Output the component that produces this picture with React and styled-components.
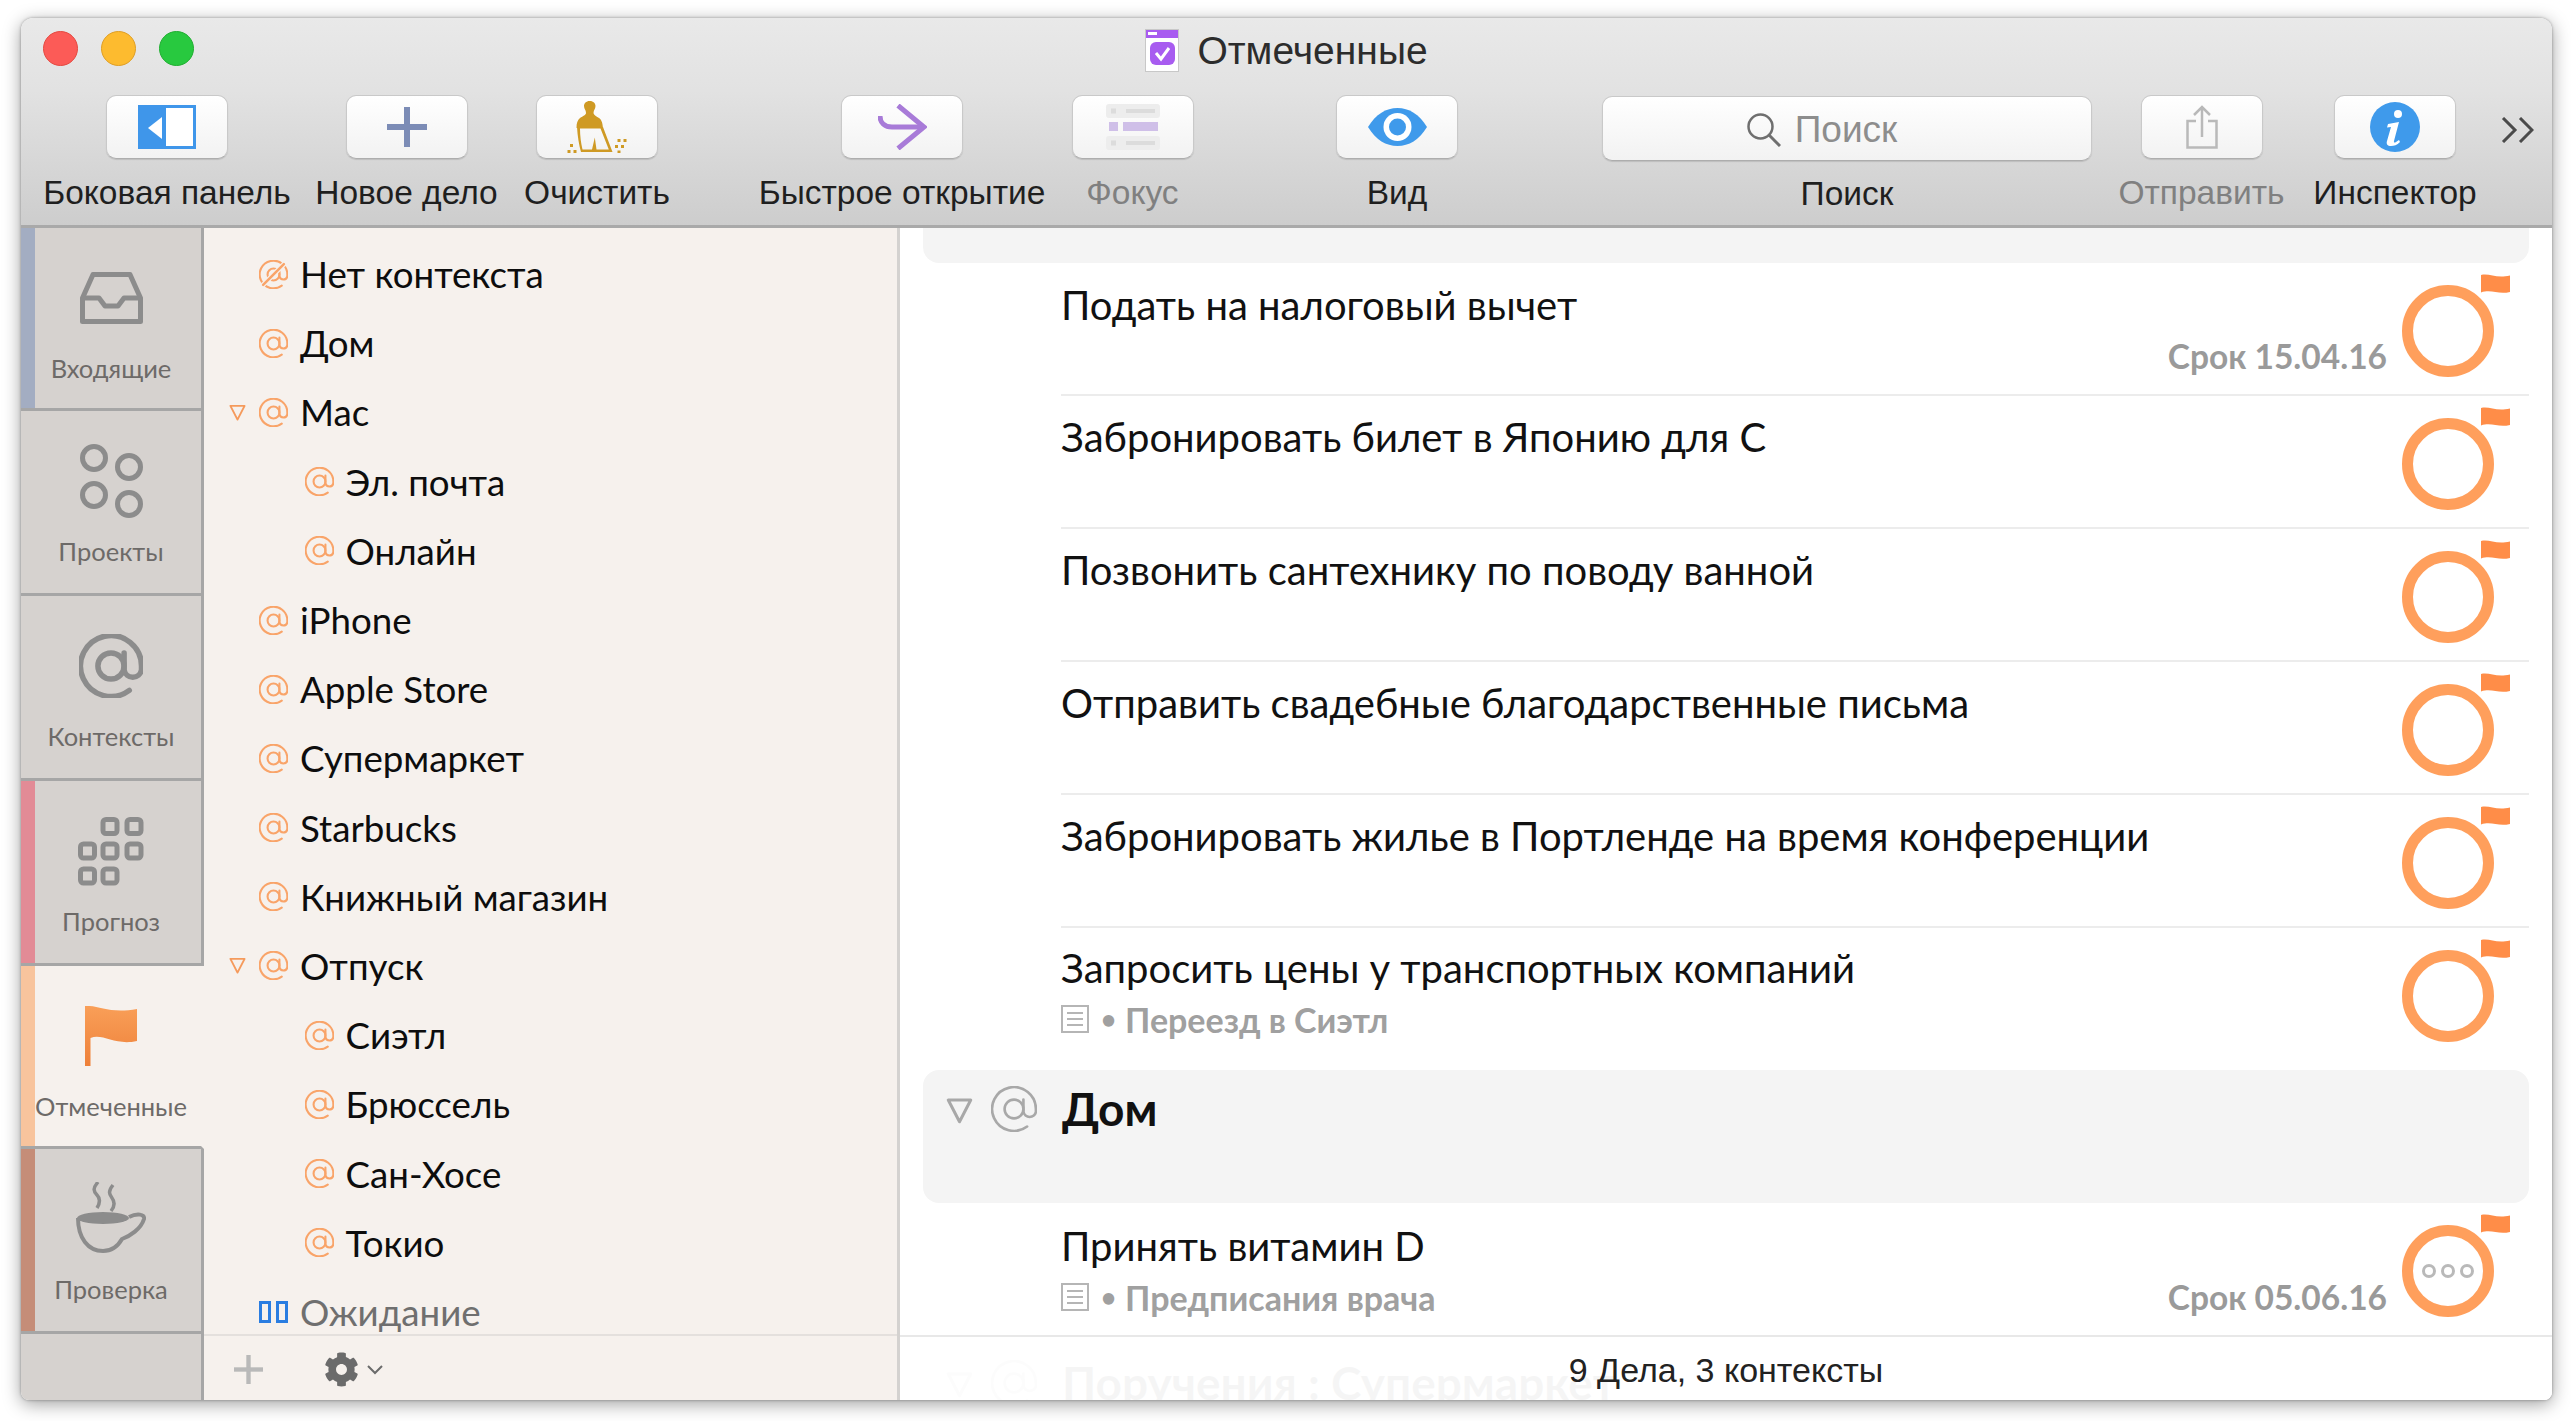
import React from 'react';
import styled, { createGlobalStyle } from 'styled-components';
import { FaCog } from 'react-icons/fa';

const GlobalStyle = createGlobalStyle`
  html, body { margin: 0; padding: 0; background: #fff; }
  * { box-sizing: border-box; }
`;

const sysFont = `'Liberation Sans', Arial, sans-serif`;
const appFont = `Lato, Roboto, 'Noto Sans', sans-serif`;

const Page = styled.div`
  width: 2571px;
  height: 1421px;
  padding: 18px 19px 21px 21px;
  background: #fff;
  overflow: hidden;
`;

const Window = styled.div`
  width: 2531px;
  height: 1382px;
  display: flex;
  flex-direction: column;
  border-radius: 12px 12px 8px 8px;
  overflow: hidden;
  background: #fff;
  box-shadow: 0 0 3px rgba(0,0,0,.35), 0 4px 18px rgba(0,0,0,.38);
  font-family: ${sysFont};
`;

/* ---------- title bar + toolbar ---------- */

const Header = styled.header`
  flex: none;
  height: 210px;
  background: linear-gradient(#e9e9e9 0%, #e2e2e2 35%, #cdcdcd 100%);
  border-bottom: 3px solid #a9a9a9;
`;

const TitleBar = styled.div`
  height: 62px;
  display: grid;
  grid-template-columns: 1fr auto 1fr;
  align-items: center;
`;

const Lights = styled.div`
  display: flex;
  gap: 23px;
  padding-left: 22px;
  margin-top: -2px;
`;

const Light = styled.span`
  width: 35px;
  height: 35px;
  border-radius: 50%;
  background: ${p => p.$fill};
  border: 1px solid ${p => p.$edge};
`;

const Title = styled.div`
  display: flex;
  align-items: center;
  gap: 18px;
  font-size: 39px;
  color: #2c2c2c;
  margin-top: 3px;
`;

const Toolbar = styled.div`
  display: flex;
  align-items: flex-start;
  padding: 15px 0 0 22px;
`;

const ToolItem = styled.div`
  flex: none;
  width: ${p => p.$w}px;
  margin-left: ${p => p.$ml || 0}px;
  display: flex;
  flex-direction: column;
  align-items: center;
`;

const ToolButton = styled.div`
  width: 122px;
  height: 64px;
  display: flex;
  align-items: center;
  justify-content: center;
  border-radius: 10px;
  background: linear-gradient(#ffffff, #f2f2f2);
  border: 1px solid #c9c9c9;
  border-bottom-color: #adadad;
  box-shadow: 0 1px 1px rgba(0,0,0,.12);
`;

const SearchField = styled(ToolButton)`
  width: 490px;
  height: 65px;
  margin-top: 1px;
  margin-bottom: -1px;
  gap: 14px;
  font-size: 37px;
  color: #8d8d8d;
  padding: 3px 50px 0 0;
`;

const ToolLabel = styled.div`
  margin-top: 14px;
  font-size: 33.5px;
  line-height: 40px;
  white-space: nowrap;
  color: ${p => (p.$off ? '#808080' : '#1f1f1f')};
`;

const Overflow = styled.div`
  flex: none;
  margin: 22px 0 0 12px;
  display: flex;
`;

/* ---------- body ---------- */

const Body = styled.div`
  flex: 1;
  min-height: 0;
  display: flex;
`;

const Rail = styled.nav`
  flex: none;
  width: 183px;
  display: flex;
  flex-direction: column;
  background: #d6d2cf;
`;

const Tab = styled.div`
  flex: none;
  height: ${p => p.$h}px;
  padding-top: 20px;
  display: flex;
  flex-direction: column;
  align-items: center;
  background: ${p => (p.$active ? '#f6f1ed' : '#d6d2cf')};
  border-bottom: 3px solid #a6a6a6;
  border-right: 3px solid ${p => (p.$active ? '#f6f1ed' : '#a6a6a6')};
  box-shadow: inset 14px 0 0 ${p => p.$strip || 'transparent'};
`;

const TabIcon = styled.div`
  height: 100px;
  display: flex;
  align-items: center;
  justify-content: center;
`;

const TabLabel = styled.div`
  font-family: ${appFont};
  font-size: 25.500px;
  line-height: 40px;
  color: #6d6a68;
  white-space: nowrap;
`;

const RailRest = styled.div`
  flex: 1;
  border-right: 3px solid #a6a6a6;
`;

const ListPane = styled.aside`
  flex: none;
  width: 696px;
  display: flex;
  flex-direction: column;
  background: #f6f1ed;
  border-right: 3px solid #d4d2d0;
`;

const ContextList = styled.div`
  flex: 1;
  min-height: 0;
  overflow: hidden;
  padding: 11.500px 0 0 25px;
`;

const ContextRow = styled.div`
  height: 69.200px;
  display: flex;
  align-items: center;
  padding-left: ${p => (p.$depth || 0) * 45.5}px;
  font-family: ${appFont};
  font-size: 36.700px;
  color: ${p => (p.$muted ? '#6f6f6f' : '#0d0d0d')};
  white-space: nowrap;
`;

const Disclosure = styled.div`
  flex: none;
  width: 30px;
  display: flex;
  align-items: center;
`;

const RowIcon = styled.div`
  flex: none;
  width: 41px;
  display: flex;
  align-items: center;
`;

const ListFooter = styled.div`
  flex: none;
  height: 66px;
  display: flex;
  align-items: center;
  padding: 3px 0 0 30px;
  border-top: 2px solid #e4e0dd;
`;

const GearGroup = styled.div`
  display: flex;
  align-items: center;
  gap: 8px;
  margin-left: 61px;
  color: #6b6b6b;
`;

const Main = styled.main`
  position: relative;
  flex: 1;
  min-width: 0;
  overflow: hidden;
  background: #fff;
`;

const TopBanner = styled.div`
  height: 35px;
  margin: 0 23px;
  background: #f4f4f4;
  border-radius: 0 0 16px 16px;
`;

const TaskRow = styled.div`
  height: 133px;
  margin: 0 23px 0 161px;
  padding-right: 35px;
  display: flex;
  border-bottom: ${p => (p.$plain ? 'none' : '2px solid #ececec')};
`;

const TaskBody = styled.div`
  flex: 1;
  min-width: 0;
  padding-top: ${p => p.$pt || 20}px;
  font-family: ${appFont};
`;

const TaskTitle = styled.div`
  font-size: 40px;
  line-height: 52px;
  color: #111;
  white-space: nowrap;
`;

const TaskMeta = styled.div`
  height: 50px;
  display: flex;
  align-items: center;
  gap: 12px;
  font-size: 34px;
  font-weight: 700;
  color: #a0a0a0;
  white-space: nowrap;
`;

const Bullet = styled.span`
  font-size: 26px;
  margin-right: -3px;
`;

const DueDate = styled.span`
  margin-left: auto;
  margin-right: 15px;
  font-size: 33.500px;
  font-weight: 700;
  color: #9a9a9a;
`;

const Status = styled.div`
  position: relative;
  flex: none;
  width: 92px;
  height: 92px;
  margin-top: 22px;
  border: 11px solid #ff9f5c;
  border-radius: 50%;
  display: flex;
  align-items: center;
  justify-content: center;
  gap: 5px;
`;

const FlagBadge = styled.div`
  position: absolute;
  top: -22px;
  right: -27px;
  display: flex;
`;

const Dot = styled.span`
  width: 14px;
  height: 14px;
  border-radius: 50%;
  border: 3px solid #b9b9b9;
`;

const GroupHeader = styled.div`
  height: 133px;
  margin: ${p => p.$mt || 0}px 23px 0;
  padding: 13px 0 0 23px;
  display: flex;
  align-items: flex-start;
  background: #f4f4f4;
  border-radius: 16px;
  font-family: ${appFont};
  font-size: 46px;
  font-weight: 700;
  line-height: 52px;
  color: #111;
  white-space: nowrap;
  svg { flex: none; }
`;

const GroupDisclosure = styled.div`
  width: 45px;
  padding-top: 14px;
  display: flex;
`;

const GroupAt = styled.div`
  width: 71px;
  padding-top: 3px;
  display: flex;
`;

const StatusBar = styled.div`
  position: absolute;
  left: 0;
  right: 0;
  bottom: 0;
  height: 65px;
  padding-top: 3px;
  display: flex;
  align-items: center;
  justify-content: center;
  background: rgba(255, 255, 255, .96);
  border-top: 2px solid #e8e8e8;
  font-size: 34px;
  color: #222;
`;

/* ---------- drawings ---------- */

const AtIcon = ({ size = 29, color = '#f9a469', width = 1.5 }) => (
  <svg width={size} height={size} viewBox="1.5 1.5 21 21" fill="none" stroke={color} strokeWidth={width} strokeLinecap="round">
    <circle cx="12" cy="12" r="4.3" />
    <path d="M16.3 7.7v5.6a2.9 2.9 0 0 0 5.7 0V12a10 10 0 1 0-4 8" />
  </svg>
);

const NoContextIcon = () => (
  <svg width="29" height="29" viewBox="1.5 1.5 21 21" fill="none" stroke="#f9a469" strokeWidth="1.5" strokeLinecap="round">
    <circle cx="12" cy="12" r="4.3" />
    <path d="M16.3 7.7v5.6a2.9 2.9 0 0 0 5.7 0V12a10 10 0 1 0-4 8" />
    <path d="M20 4 4 20" stroke="#f6f1ed" strokeWidth="3.6" />
    <path d="M19.500 4.500 4.500 19.500" strokeWidth="1.8" />
  </svg>
);

const WaitIcon = () => (
  <svg width="29" height="22" viewBox="0 0 29 22" fill="none" stroke="#2a7de1" strokeWidth="3">
    <rect x="1.5" y="1.5" width="9" height="19" />
    <rect x="18.5" y="1.5" width="9" height="19" />
  </svg>
);

const Triangle = ({ size = 17, color = '#f59a5c', width = 2 }) => (
  <svg width={size} height={size} viewBox="0 0 18 18" fill="none" stroke={color} strokeWidth={width} strokeLinejoin="round">
    <path d="M1.5 2h15L9 16.5z" />
  </svg>
);

const SmallFlag = () => (
  <svg width="29" height="20" viewBox="0 0 29 20">
    <path d="M0 1C9-1 15 5 29 1.5V18C17 21 11 15 0 18.500Z" fill="#ff8d48" />
  </svg>
);

const NoteIcon = () => (
  <svg width="28" height="28" viewBox="0 0 28 28" fill="#fff" stroke="#b5b5b5" strokeWidth="2">
    <rect x="1" y="1" width="26" height="26" />
    <path d="M6 8h16M6 14h16M6 20h16" fill="none" />
  </svg>
);

const DocIcon = () => (
  <svg width="34" height="43" viewBox="0 0 34 43">
    <rect x=".5" y=".5" width="33" height="42" fill="#fff" stroke="#c8c8c8" />
    <rect x="1" y="1" width="32" height="8" fill="#a85cf0" />
    <rect x="3" y="3" width="9" height="3" fill="#fff" />
    <rect x="5" y="13" width="25" height="23" rx="6" fill="#a85cf0" />
    <path d="M11 24l5 6 8-11" fill="none" stroke="#fff" strokeWidth="3" />
  </svg>
);

const SidebarGlyph = () => (
  <svg width="58" height="44" viewBox="0 0 58 44">
    <rect width="58" height="44" fill="#3f96ea" />
    <rect x="28" y="3" width="27" height="38" fill="#fff" />
    <path d="M24 12v22L10 23z" fill="#fff" />
  </svg>
);

const PlusGlyph = ({ size = 40, color = '#7c8cb6', width = 6 }) => (
  <svg width={size} height={size} viewBox="0 0 40 40" fill={color}>
    <rect x={20 - width / 2} width={width} height="40" />
    <rect y={20 - width / 2} width="40" height={width} />
  </svg>
);

const BroomGlyph = () => (
  <svg width="62" height="52" viewBox="38 11 62 52" fill="#cf9a24">
    <path d="M61.700 11C58 11 56 13.500 56 16C56 19 58 20 58 23C58 25 55 26 52 28C49.500 30 48.500 33 48.500 38H75C74.500 32 73 29 71 28C68 26 65.500 25 65.500 23C65.500 20 67.500 19 67.500 16C67.500 13.500 65.500 11 61.700 11Z" />
    <path fillRule="evenodd" d="M49 37H75L84.500 62H53C51 55 49.500 46 49 37ZM52 38.500H72.500L80.800 59.500H68.500L66.800 47.500L64 59.500H54.500C53 53 52 46 52 38.500Z" />
    <path d="M42 54h3v3h-3zM39.500 60h3v3h-3zM45.500 60h3v3h-3zM89.500 49h3v3h-3zM95.500 49h3v3h-3zM87 55h3v3h-3zM93 55h3v3h-3zM89.500 60.500h3v2.500h-3z" />
  </svg>
);

const QuickGlyph = () => (
  <svg width="49" height="46" viewBox="0 0 49 46" fill="none" stroke="#a87bd8" strokeWidth="5">
    <path d="M20 1.500 46 23 20 44.500" />
    <path d="M2 12c0 7 5 11 12 11h32" />
  </svg>
);

const FocusGlyph = () => (
  <svg width="54" height="46" viewBox="0 0 54 46">
    <rect width="54" height="14" rx="3" fill="#ededed" />
    <rect x="20" y="5" width="29" height="4" fill="#dcdcdc" />
    <rect x="5" y="4.500" width="5" height="5" fill="#dcdcdc" />
    <rect x="3" y="18" width="9" height="9" fill="#cfbfe8" />
    <rect x="17" y="18" width="35" height="9" fill="#cfbfe8" />
    <rect y="32" width="54" height="14" rx="3" fill="#ededed" />
    <rect x="20" y="37" width="29" height="4" fill="#dcdcdc" />
    <rect x="5" y="36.500" width="5" height="5" fill="#dcdcdc" />
  </svg>
);

const EyeGlyph = () => (
  <svg width="59" height="38" viewBox="0 0 59 38">
    <path d="M0 19C8 6 18 0 29.500 0S51 6 59 19C51 32 41 38 29.500 38S8 32 0 19z" fill="#3f9aeb" />
    <circle cx="29.500" cy="19" r="14" fill="#fff" />
    <circle cx="29.500" cy="19" r="8.500" fill="#3f9aeb" />
  </svg>
);

const LensGlyph = () => (
  <svg width="34" height="34" viewBox="0 0 34 34" fill="none" stroke="#6f6f6f" strokeWidth="2.500">
    <circle cx="13.500" cy="13.500" r="12" />
    <path d="M22 22l11 11" strokeWidth="3" />
  </svg>
);

const ShareGlyph = () => (
  <svg width="32" height="44" viewBox="0 0 32 44" fill="none" stroke="#b9b9b9" strokeWidth="2.500">
    <path d="M10 16H1.500v26.500h29V16H22" />
    <path d="M16 32V2M8 10l8-8 8 8" />
  </svg>
);

const InfoGlyph = () => (
  <svg width="50" height="50" viewBox="0 0 50 50">
    <circle cx="25" cy="25" r="25" fill="#3f9aeb" />
    <circle cx="28" cy="12" r="4" fill="#fff" />
    <path d="M18 22l11-2-5 19c-.4 1.500.5 2 2 1l3-2 1 2c-3 3-6 4-9 4-3.500 0-5-2-4-5l4-14-4 .5z" fill="#fff" />
  </svg>
);

const ChevronsGlyph = () => (
  <svg width="33" height="26" viewBox="0 0 33 26" fill="none" stroke="#4a4a4a" strokeWidth="3">
    <path d="M2 1l12 12L2 25M19 1l12 12-12 12" />
  </svg>
);

const InboxGlyph = () => (
  <svg width="63" height="52" viewBox="0 0 63 52" fill="none" stroke="#8c8c8c" strokeWidth="5" strokeLinejoin="round">
    <path d="M13 2.500h37L60.500 26v23.500h-58V26z" />
    <path d="M2.500 26H19l6 8h13l6-8h16.500" />
  </svg>
);

const ProjectsGlyph = () => (
  <svg width="63" height="75" viewBox="0 0 63 75" fill="none" stroke="#8c8c8c" strokeWidth="5">
    <circle cx="14" cy="14" r="11.500" />
    <circle cx="49" cy="23" r="11.500" />
    <circle cx="14" cy="51" r="11.500" />
    <circle cx="49" cy="60" r="11.500" />
  </svg>
);

const ForecastGlyph = () => (
  <svg width="66" height="69" viewBox="0 0 66 69" fill="none" stroke="#8c8c8c" strokeWidth="5">
    <rect x="25" y="2.500" width="14" height="14" rx="3" />
    <rect x="49" y="2.500" width="14" height="14" rx="3" />
    <rect x="2.500" y="27" width="14" height="14" rx="3" />
    <rect x="25" y="27" width="14" height="14" rx="3" />
    <rect x="49" y="27" width="14" height="14" rx="3" />
    <rect x="2.500" y="52" width="14" height="14" rx="3" />
    <rect x="25" y="52" width="14" height="14" rx="3" />
  </svg>
);

const BigFlag = () => (
  <svg width="52" height="60" viewBox="0 0 52 60">
    <defs>
      <linearGradient id="flagFill" x1="0" y1="0" x2="0" y2="1">
        <stop offset="0" stopColor="#f99f58" />
        <stop offset="1" stopColor="#ee8039" />
      </linearGradient>
    </defs>
    <path d="M0 0C14-1 24 8 52 3V35C30 40 18 27 5.500 32V60H0Z" fill="url(#flagFill)" />
  </svg>
);

const CoffeeGlyph = () => (
  <svg width="70" height="75" viewBox="0 0 70 75" fill="none" stroke="#8c8c8c">
    <path d="M22 0c-5 6-5 9-1 13s3 8 0 13M37 3c-5 6-4 9-1 13s3 8-1 13" strokeWidth="3.500" />
    <ellipse cx="27" cy="36" rx="26" ry="6" fill="#8c8c8c" strokeWidth="0" />
    <path d="M2 36c0 20 10 33 25 33 9 0 15-5 19-12 8-3 19-10 22-20 1-5-7-6-15-2" strokeWidth="4" />
  </svg>
);

const tabs = [
  { label: 'Входящие', h: 183, strip: '#a3adc2', icon: <InboxGlyph /> },
  { label: 'Проекты', h: 185, icon: <ProjectsGlyph /> },
  { label: 'Контексты', h: 185, icon: <AtIcon size={64} color="#8c8c8c" width={1.8} /> },
  { label: 'Прогноз', h: 185, strip: '#e28b96', icon: <ForecastGlyph /> },
  { label: 'Отмеченные', h: 183, strip: '#f8c49d', active: true, icon: <BigFlag /> },
  { label: 'Проверка', h: 185, strip: '#c58d78', icon: <CoffeeGlyph /> },
];

const contexts = [
  { label: 'Нет контекста', icon: <NoContextIcon /> },
  { label: 'Дом' },
  { label: 'Mac', open: true },
  { label: 'Эл. почта', depth: 1 },
  { label: 'Онлайн', depth: 1 },
  { label: 'iPhone' },
  { label: 'Apple Store' },
  { label: 'Супермаркет' },
  { label: 'Starbucks' },
  { label: 'Книжный магазин' },
  { label: 'Отпуск', open: true },
  { label: 'Сиэтл', depth: 1 },
  { label: 'Брюссель', depth: 1 },
  { label: 'Сан-Хосе', depth: 1 },
  { label: 'Токио', depth: 1 },
  { label: 'Ожидание', muted: true, icon: <WaitIcon /> },
];

const flagged = [
  { title: 'Подать на налоговый вычет', due: 'Срок 15.04.16', pt: 16 },
  { title: 'Забронировать билет в Японию для С', pt: 15 },
  { title: 'Позвонить сантехнику по поводу ванной', pt: 15 },
  { title: 'Отправить свадебные благодарственные письма', pt: 15 },
  { title: 'Забронировать жилье в Портленде на время конференции', pt: 15 },
  { title: 'Запросить цены у транспортных компаний', project: 'Переезд в Сиэтл', pt: 14, plain: true },
];

function Task({ title, project, due, pt, plain, pending }) {
  return (
    <TaskRow $plain={plain}>
      <TaskBody $pt={pt}>
        <TaskTitle>{title}</TaskTitle>
        <TaskMeta>
          {project && <NoteIcon />}
          {project && <Bullet>•</Bullet>}
          {project && <span>{project}</span>}
          {due && <DueDate>{due}</DueDate>}
        </TaskMeta>
      </TaskBody>
      <Status>
        <FlagBadge><SmallFlag /></FlagBadge>
        {pending && <><Dot /><Dot /><Dot /></>}
      </Status>
    </TaskRow>
  );
}

export default function App() {
  return (
    <>
      <GlobalStyle />
      <Page>
        <Window>
          <Header>
            <TitleBar>
              <Lights>
                <Light $fill="#fc5b57" $edge="#e5483f" />
                <Light $fill="#fdbb2f" $edge="#df9e24" />
                <Light $fill="#28c93f" $edge="#1fae30" />
              </Lights>
              <Title><DocIcon />Отмеченные</Title>
            </TitleBar>
            <Toolbar>
              <ToolItem $w={248}>
                <ToolButton><SidebarGlyph /></ToolButton>
                <ToolLabel>Боковая панель</ToolLabel>
              </ToolItem>
              <ToolItem $w={231}>
                <ToolButton><PlusGlyph /></ToolButton>
                <ToolLabel>Новое дело</ToolLabel>
              </ToolItem>
              <ToolItem $w={150}>
                <ToolButton><BroomGlyph /></ToolButton>
                <ToolLabel>Очистить</ToolLabel>
              </ToolItem>
              <ToolItem $w={300} $ml={80}>
                <ToolButton><QuickGlyph /></ToolButton>
                <ToolLabel>Быстрое открытие</ToolLabel>
              </ToolItem>
              <ToolItem $w={161}>
                <ToolButton><FocusGlyph /></ToolButton>
                <ToolLabel $off>Фокус</ToolLabel>
              </ToolItem>
              <ToolItem $w={200} $ml={84}>
                <ToolButton><EyeGlyph /></ToolButton>
                <ToolLabel>Вид</ToolLabel>
              </ToolItem>
              <ToolItem $w={490} $ml={105}>
                <SearchField><LensGlyph />Поиск</SearchField>
                <ToolLabel>Поиск</ToolLabel>
              </ToolItem>
              <ToolItem $w={200} $ml={9.5}>
                <ToolButton><ShareGlyph /></ToolButton>
                <ToolLabel $off>Отправить</ToolLabel>
              </ToolItem>
              <ToolItem $w={187}>
                <ToolButton><InfoGlyph /></ToolButton>
                <ToolLabel>Инспектор</ToolLabel>
              </ToolItem>
              <Overflow><ChevronsGlyph /></Overflow>
            </Toolbar>
          </Header>
          <Body>
            <Rail>
              {tabs.map(t => (
                <Tab key={t.label} $h={t.h} $strip={t.strip} $active={t.active}>
                  <TabIcon>{t.icon}</TabIcon>
                  <TabLabel>{t.label}</TabLabel>
                </Tab>
              ))}
              <RailRest />
            </Rail>
            <ListPane>
              <ContextList>
                {contexts.map(c => (
                  <ContextRow key={c.label} $depth={c.depth} $muted={c.muted}>
                    <Disclosure>{c.open && <Triangle />}</Disclosure>
                    <RowIcon>{c.icon || <AtIcon />}</RowIcon>
                    {c.label}
                  </ContextRow>
                ))}
              </ContextList>
              <ListFooter>
                <PlusGlyph size={29} color="#b9b9b9" width={6} />
                <GearGroup>
                  <FaCog size={35} />
                  <svg width="16" height="10" viewBox="0 0 16 10" fill="none" stroke="#6b6b6b" strokeWidth="2">
                    <path d="M1 1l7 7 7-7" />
                  </svg>
                </GearGroup>
              </ListFooter>
            </ListPane>
            <Main>
              <TopBanner />
              {flagged.map(t => <Task key={t.title} {...t} />)}
              <GroupHeader $mt={9}>
                <GroupDisclosure><Triangle size={27} color="#a8a8a8" /></GroupDisclosure>
                <GroupAt><AtIcon size={46} color="#a8a8a8" width={1.2} /></GroupAt>
                Дом
              </GroupHeader>
              <Task title="Принять витамин D" project="Предписания врача" due="Срок 05.06.16" pt={17} plain pending />
              <GroupHeader $mt={8}>
                <GroupDisclosure><Triangle size={27} color="#a8a8a8" /></GroupDisclosure>
                <GroupAt><AtIcon size={46} color="#a8a8a8" width={1.2} /></GroupAt>
                Поручения : Супермаркет
              </GroupHeader>
              <StatusBar>9 Дела, 3 контексты</StatusBar>
            </Main>
          </Body>
        </Window>
      </Page>
    </>
  );
}
